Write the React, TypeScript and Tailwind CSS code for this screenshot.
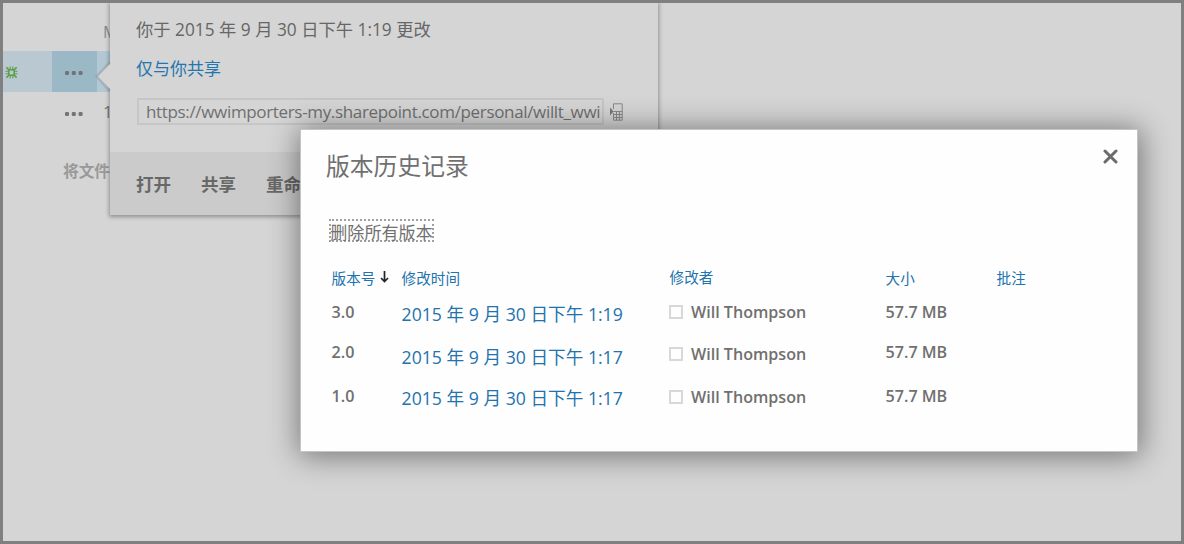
const LATIN = 'font-["Open_Sans","Noto_Sans_CJK_SC",sans-serif]';

const versions = [
  { id: '3.0', date: '2015 年 9 月 30 日下午 1:19', idPad: 'pt-[2px]', datePad: 'pt-[4px]', userPad: 'pt-[2px]' },
  { id: '2.0', date: '2015 年 9 月 30 日下午 1:17', idPad: 'pt-0', datePad: 'pt-[5px]', userPad: 'pt-[2px]' },
  { id: '1.0', date: '2015 年 9 月 30 日下午 1:17', idPad: 'pt-[2px]', datePad: 'pt-[4px]', userPad: 'pt-[3px]' },
];

function Dots() {
  return (
    <svg className="shrink-0" width="18" height="4" viewBox="0 0 18 4" fill="#717577">
      <rect x="0" y="0" width="4" height="4" rx="1.2" />
      <rect x="6.8" y="0" width="4" height="4" rx="1.2" />
      <rect x="13.6" y="0" width="4" height="4" rx="1.2" />
    </svg>
  );
}

function NewBadge() {
  return (
    <svg width="13" height="13" viewBox="0 0 13 13" fill="none" stroke="#5b9f49" strokeWidth="1.5">
      <rect x="3.8" y="3.8" width="5.4" height="5.4" rx="1.8" />
      <path d="M5.2 .5v3.3M7.8 .5v3.3M5.2 9.2v3.3M7.8 9.2v3.3M.5 5.2h3.3M.5 7.8h3.3M9.2 5.2h3.3M9.2 7.8h3.3" strokeWidth="1.1" />
      <path d="M1.4 1.4l3 3M8.6 8.6l3 3M11.6 1.4l-3 3M4.4 8.6l-3 3" />
    </svg>
  );
}

function PhoneIcon() {
  return (
    <svg width="13" height="18" viewBox="0 0 13 18" fill="none">
      <path d="M0 4.5v8l3.5-4z" fill="#777" />
      <path d="M3.5 6V.8h8.7v16.4H3.5V10" stroke="#888" />
      <path d="M3.5 8.5h8.7M3.5 11.5h8.7M3.5 14.5h8.7M6.5 8.5v8.5M9.4 8.5v8.5" stroke="#888" />
    </svg>
  );
}

function FileList() {
  return (
    <div className="flex w-[108px] flex-col overflow-hidden text-[16px] leading-6 text-[#8b8b8b]">
      <div className="flex h-12 pt-[17px] pl-[100px] text-[#8a8a8a]">M</div>
      <div className="flex h-[41px] bg-[#b9c8d1]">
        <div className="flex w-[49px] shrink-0 items-center pt-[2px] pl-[1.5px]"><NewBadge /></div>
        <div className="flex w-[45px] shrink-0 items-center bg-[#9bb8c6] pt-[3px] pl-[13px]"><Dots /></div>
        <div className="flex-1 bg-[#b3c8d4]" />
      </div>
      <div className="flex h-[41px] items-center pt-[3px] pl-[62px] text-[17px] text-[#777]">
        <Dots />
        <span className="-mt-1 ml-[20px]">1</span>
      </div>
      <div className="flex pt-[26px] pl-[60px] text-[15.7px] font-bold whitespace-nowrap text-[#999]">将文件</div>
    </div>
  );
}

function SharePopup() {
  return (
    <div className="absolute top-[3px] left-[110px] flex h-[212px] w-[548px] flex-col bg-[#d5d5d5] shadow-[0_1px_4px_1px_rgba(0,0,0,0.32)] [clip-path:inset(0_-10px_-10px_-20px)]">
      <svg className="absolute top-[58px] -left-[16px]" width="17" height="32" viewBox="0 0 17 32">
        <path d="M16 1L3 15.5L16 30" fill="none" stroke="#777" strokeOpacity=".25" strokeWidth="3" />
        <path d="M17 2L4 15.5L17 29z" fill="#d5d5d5" />
      </svg>
      <div className="flex h-[149px] flex-col pl-[26px] whitespace-nowrap">
        <div className="mt-[15px] text-[17.3px] leading-6 text-[#666]">你于 2015 年 9 月 30 日下午 1:19 更改</div>
        <div className="mt-[15px] text-[17px] leading-6 text-[#2476ae]">仅与你共享</div>
        <div className="mt-[17px] flex items-center">
          <div className="ml-px flex h-[27px] w-[467px] items-center border-2 border-[#c6c6c6] pt-px pl-[7px] text-[17px] tracking-[-0.34px] text-[#707070]">
            https://wwimporters-my.sharepoint.com/personal/willt_wwi
          </div>
          <div className="ml-[6px]"><PhoneIcon /></div>
        </div>
      </div>
      <div className="flex flex-1 gap-[30px] bg-[#cbcbcb] pt-[20px] pl-[26px] text-[17.5px] leading-6 font-bold whitespace-nowrap text-[#686868]">
        <span>打开</span>
        <span>共享</span>
        <span>重命</span>
      </div>
    </div>
  );
}

function VersionDialog() {
  return (
    <div className="absolute top-[129px] left-[300px] flex h-[323px] w-[838px] flex-col border border-[#c4c4c4] bg-[#fefefe] shadow-[1px_2px_28px_2px_rgba(0,0,0,0.45)]">
      <div className="flex h-[90px] items-start justify-between pr-[19px] pl-[25px]">
        <h1 className="pt-[20px] text-[23.8px] leading-8 font-normal text-[#707070]">版本历史记录</h1>
        <svg className="mt-[19px]" width="15" height="15" viewBox="0 0 15 15" fill="none" stroke="#6b6b6b" strokeWidth="3" strokeLinecap="round">
          <path d="M2 2l11 11M13 2L2 13" />
        </svg>
      </div>
      <div className="-mt-px ml-[28px] flex h-[23px] w-[105px] items-center justify-center border-2 border-dotted border-[#a0a0a0] pt-[4px] text-[17.1px] leading-5 font-normal whitespace-nowrap text-[#707070]">
        删除所有版本
      </div>
      <div className="flex flex-col pt-[24px] pl-[30.6px] whitespace-nowrap">
        <div className="grid h-[32px] grid-cols-[70px_268px_216px_111px_1fr] text-[14.6px] leading-6 text-[#2273ad]">
          <div className="flex">
            版本号
            <svg className="mt-[4px] ml-[5px]" width="9" height="14" viewBox="0 0 9 14" fill="none" stroke="#222" strokeWidth="1.7">
              <path d="M4.5 1v10.5M1 8l3.5 3.5L8 8" />
            </svg>
          </div>
          <div>修改时间</div>
          <div className="-mt-px">修改者</div>
          <div>大小</div>
          <div>批注</div>
        </div>
        {versions.map((v) => (
          <div key={v.id} className="grid h-[42px] grid-cols-[70px_268px_216px_111px_1fr] text-[16.1px] leading-6">
            <div className={`font-semibold text-[#707070] ${v.idPad}`}>{v.id}</div>
            <div className={`text-[17.65px] text-[#2273ad] ${v.datePad}`}>{v.date}</div>
            <div className={`flex font-semibold text-[#707070] ${v.userPad}`}>
              <span className="mt-[5px] mr-[8px] -ml-[0.6px] size-[14px] border-2 border-[#d8d8d8]" />
              Will Thompson
            </div>
            <div className={`font-semibold text-[#707070] ${v.idPad}`}>57.7 MB</div>
          </div>
        ))}
      </div>
    </div>
  );
}

export default function App() {
  return (
    <div className={`relative flex h-[544px] w-[1184px] overflow-hidden border-[3px] border-[#808080] bg-[#d5d5d5] ${LATIN}`}>
      <FileList />
      <div className="absolute -top-[3px] -left-[3px] h-[544px] w-[1184px]">
        <SharePopup />
        <VersionDialog />
      </div>
    </div>
  );
}
